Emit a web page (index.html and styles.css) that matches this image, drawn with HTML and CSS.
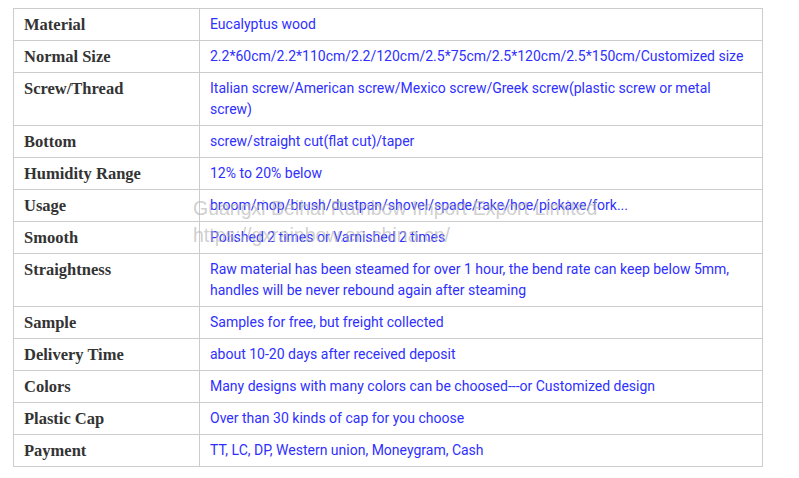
FILE: index.html
```html
<!DOCTYPE html>
<html>
<head>
<meta charset="utf-8">
<link rel="stylesheet" href="styles.css">
</head>
<body>
<div class="wrap">
<table class="spec">
<tr><th>Material</th><td>Eucalyptus wood</td></tr>
<tr><th>Normal Size</th><td>2.2*60cm/2.2*110cm/2.2/120cm/2.5*75cm/2.5*120cm/2.5*150cm/Customized size</td></tr>
<tr><th>Screw/Thread</th><td>Italian screw/American screw/Mexico screw/Greek screw(plastic screw or metal screw)</td></tr>
<tr><th>Bottom</th><td>screw/straight cut(flat cut)/taper</td></tr>
<tr><th>Humidity Range</th><td>12% to 20% below</td></tr>
<tr><th>Usage</th><td>broom/mop/brush/dustpan/shovel/spade/rake/hoe/pickaxe/fork...</td></tr>
<tr><th>Smooth</th><td>Polished 2 times or Varnished 2 times</td></tr>
<tr><th>Straightness</th><td>Raw material has been steamed for over 1 hour, the bend rate can keep below 5mm, handles will be never rebound again after steaming</td></tr>
<tr><th>Sample</th><td>Samples for free, but freight collected</td></tr>
<tr><th>Delivery Time</th><td>about 10-20 days after received deposit</td></tr>
<tr><th>Colors</th><td>Many designs with many colors can be choosed---or Customized design</td></tr>
<tr><th>Plastic Cap</th><td>Over than 30 kinds of cap for you choose</td></tr>
<tr><th>Payment</th><td>TT, LC, DP, Western union, Moneygram, Cash</td></tr>
</table>
<div class="watermark">
<div>Guangxi Beihai Rainbow Import Export Limited</div>
<div>https://gxrainbow.en.china.cn/</div>
</div>
</div>
</body>
</html>
```
FILE: styles.css
```css
html, body { margin: 0; padding: 0; background: #fff; }
body { padding: 8px 0 0 13px; }
.wrap { position: relative; width: 750px; }
.spec {
  border-collapse: collapse;
  width: 750px;
  table-layout: fixed;
}
.spec th, .spec td {
  border: 1px solid #ccc;
  padding: 5px 10px;
  vertical-align: top;
  text-align: left;
  line-height: 21px;
}
.spec th {
  width: 165px;
  font-family: "Liberation Serif", serif;
  font-weight: bold;
  font-size: 16.5px;
  color: #333;
}
.spec td {
  font-family: Roboto, sans-serif;
  font-size: 14px;
  color: #2f2fff;
}
.watermark {
  position: absolute;
  left: 180px;
  top: 187px;
  font-family: "Liberation Sans", Arial, sans-serif;
  font-size: 19.5px;
  line-height: 27px;
  color: rgba(180,180,180,0.65);
  pointer-events: none;
  white-space: nowrap;
}
```
